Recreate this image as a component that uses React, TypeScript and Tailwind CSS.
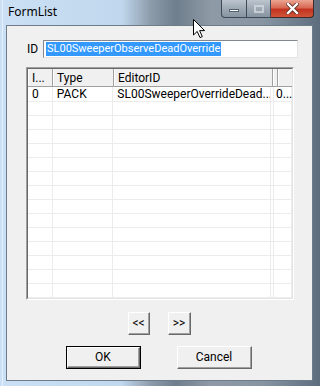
import React from "react";

const dlg = { fontFamily: '"Liberation Sans Narrow", Roboto, sans-serif' };

function ClassicButton({ label, w, isDefault }: { label: string; w: number; isDefault?: boolean }) {
  return (
    <div
      className={`h-[23px] flex ${isDefault ? "border border-[#000]" : ""}`}
      style={{ width: w }}
    >
      <div className="flex-1 border-t border-l border-t-white border-l-white border-r border-b border-r-[#696969] border-b-[#696969] flex">
        <div className="flex-1 border-r border-b border-r-[#a0a0a0] border-b-[#a0a0a0] bg-[#f0f0f0] flex items-center justify-center text-[12px] text-black leading-none">
          {label}
        </div>
      </div>
    </div>
  );
}

const rows = Array.from({ length: 14 });

export default function App() {
  return (
    <div
      className="relative w-[320px] h-[386px] overflow-hidden bg-[linear-gradient(90deg,#cbe0f4_0%,#c0d7ed_38%,#8d9cab_47%,#6f7e8d_55%,#8e9aa6_66%,#8795a3_82%,#5d6d7e_100%)]"
      style={dlg}
    >
      {/* left frame highlight */}
      <div className="absolute left-[2px] top-0 w-[1px] h-[386px] bg-[#e4f0fb]" />
      {/* title bar */}
      <div className="h-[25px] flex items-start">
        <div
          className="pl-[8px] pt-[4px] text-[12px] text-black leading-[16px]"
          style={{ fontFamily: '"Noto Sans", "Open Sans", sans-serif' }}
        >
          FormList
        </div>
        <div className="ml-auto mr-[6px] flex h-[18px] mt-0">
          <div className="w-[26px] h-[18px] border border-t-0 border-[#3e4a57] rounded-bl-[4px] bg-[linear-gradient(180deg,#bcc5ce_0%,#9ea9b4_50%,#8794a1_100%)] flex items-center justify-center">
            <div className="w-[10px] h-[3px] bg-white border border-[#556270] mt-[3px]" />
          </div>
          <div className="w-[24px] h-[18px] border-b border-r border-[#3e4a57] bg-[linear-gradient(180deg,#bcc5ce_0%,#9ea9b4_50%,#8794a1_100%)] flex items-center justify-center">
            <div className="w-[10px] h-[8px] border-2 border-[#d2d8de] opacity-80" />
          </div>
          <div className="w-[43px] h-[18px] border-b border-r border-[#3e2a28] rounded-br-[4px] bg-[linear-gradient(180deg,#eba492_0%,#d86a55_45%,#c2331f_55%,#d0543a_100%)] flex items-center justify-center">
            <svg width="13" height="11" viewBox="0 0 13 11">
              <path d="M2 1 L11 10 M11 1 L2 10" stroke="#5a2b22" strokeWidth="4" strokeLinecap="square" />
              <path d="M2 1 L11 10 M11 1 L2 10" stroke="#ffffff" strokeWidth="2.4" strokeLinecap="square" />
            </svg>
          </div>
        </div>
      </div>

      {/* client area */}
      <div className="ml-[6px] w-[307px] h-[356px] border border-[#6e7c8a] bg-[#f0f0f0] flex flex-col">
        {/* ID row */}
        <div className="mt-[14px] flex items-center h-[18px]">
          <div className="ml-[20px] w-[16px] text-[12px] text-black leading-none">ID</div>
          <div className="w-[255px] h-[18px] border border-[#828790] border-r-[#e3e3e3] border-b-[#e3e3e3] bg-white flex items-center pl-[2px]">
            <span className="bg-[#3399ff] text-white text-[11px] leading-[14px] px-[1px]">
              SL00SweeperObserveDeadOverride
            </span>
          </div>
        </div>

        {/* list view */}
        <div className="mt-[9px] ml-[19px] w-[268px] h-[233px] border border-t-[#a0a0a0] border-l-[#a0a0a0] border-b-white border-r-white">
          <div className="w-full h-full border border-t-[#696969] border-l-[#696969] border-b-[#e3e3e3] border-r-[#e3e3e3] bg-white overflow-hidden text-[11px] text-black">
            {/* header */}
            <div className="flex h-[18px] border-b border-[#a0a0a0]">
              {[
                { t: "I...", w: 25 },
                { t: "Type", w: 61 },
                { t: "EditorID", w: 159 },
                { t: "", w: 3 },
                { t: "", w: 18 },
              ].map((c, i) => (
                <div
                  key={i}
                  className="h-full border-l border-l-white border-r border-r-[#a0a0a0] bg-[#f0f0f0] flex items-center pl-[3px] leading-none shrink-0 text-[12px]"
                  style={{ width: c.w }}
                >
                  {c.t}
                </div>
              ))}
            </div>
            {/* rows */}
            <div className="relative">
              <div className="flex h-[15px] border-b border-[#ececec] items-center leading-none text-[12px]">
                <div className="w-[25px] pl-[4px] border-r border-[#ececec] h-full flex items-center">0</div>
                <div className="w-[61px] pl-[4px] border-r border-[#ececec] h-full flex items-center">PACK</div>
                <div className="w-[159px] pl-[4px] border-r border-[#ececec] h-full flex items-center whitespace-nowrap overflow-hidden">
                  SL00SweeperOverrideDead...
                </div>
                <div className="w-[3px] border-r border-[#ececec] h-full" />
                <div className="w-[18px] pl-[2px] border-r border-[#ececec] h-full flex items-center">0...</div>
              </div>
              {rows.map((_, i) => (
                <div key={i} className="flex h-[14px] border-b border-[#ececec]">
                  <div className="w-[25px] border-r border-[#ececec]" />
                  <div className="w-[61px] border-r border-[#ececec]" />
                  <div className="w-[159px] border-r border-[#ececec]" />
                  <div className="w-[3px] border-r border-[#ececec]" />
                  <div className="w-[18px] border-r border-[#ececec]" />
                </div>
              ))}
            </div>
          </div>
        </div>

        {/* nav buttons */}
        <div className="mt-[12px] flex">
          <div className="ml-[121px]">
            <ClassicButton label="<<" w={22} />
          </div>
          <div className="ml-[18px]">
            <ClassicButton label=">>" w={23} />
          </div>
        </div>

        {/* OK / Cancel */}
        <div className="mt-[11px] flex">
          <div className="ml-[59px]">
            <ClassicButton label="OK" w={75} isDefault />
          </div>
          <div className="ml-[36px]">
            <ClassicButton label="Cancel" w={75} />
          </div>
        </div>
      </div>

      {/* mouse cursor */}
      <svg className="absolute left-[193px] top-[19px]" width="13" height="20" viewBox="0 0 13 20">
        <path
          d="M0.5 0.5 L0.5 16 L4.2 12.4 L7 18.6 L9.3 17.6 L6.6 11.6 L11.6 11.6 Z"
          fill="#ffffff"
          stroke="#000000"
          strokeWidth="1"
          strokeLinejoin="miter"
        />
      </svg>
    </div>
  );
}
